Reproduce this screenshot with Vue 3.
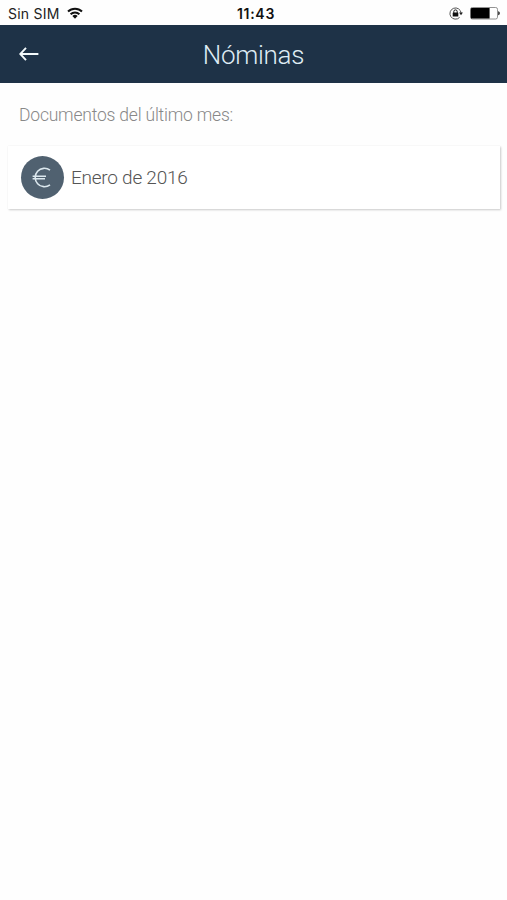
<template>
    <div class="screen">
        <div class="status-bar">
            <div class="carrier">
                <span class="carrier-name">Sin SIM</span>
                <svg class="wifi" viewBox="0 0 16 12" width="16" height="12">
                    <g fill="none" stroke="#111" stroke-width="2">
                        <path d="M1 4.5a10 10 0 0 1 14 0" />
                        <path d="M3.6 7.2a6.3 6.3 0 0 1 8.8 0" />
                    </g>
                    <path d="M5.4 9a3.8 3.8 0 0 1 5.2 0L8 11.7z" fill="#111" />
                </svg>
            </div>
            <span class="clock">11:43</span>
            <div class="indicators">
                <svg class="lock" viewBox="0 0 14 14" width="14" height="14">
                    <path d="M10.6 10.4a5.6 5.6 0 1 1 1.5-4.4" fill="none" stroke="#555" stroke-width="1" />
                    <path d="M10.1 5.6h3.8L12 8.3z" fill="#222" />
                    <rect x="3.7" y="5.6" width="5.6" height="4" rx=".4" fill="#111" />
                    <path d="M4.8 5.9V4.6a1.7 1.7 0 0 1 3.4 0v1.3" fill="none" stroke="#111" stroke-width="1" />
                </svg>
                <svg class="battery" viewBox="0 0 30 13" width="30" height="13">
                    <rect x=".5" y=".5" width="27" height="11.5" rx="1.8" fill="#fff" stroke="#777" stroke-width=".8" />
                    <path d="M2 1h17.6v10.6H2a1.2 1.2 0 0 1-1.2-1.2V2.2A1.2 1.2 0 0 1 2 1z" fill="#000" />
                    <path d="M28.2 4.3c2.1.5 2.1 3.5 0 4z" fill="#222" />
                </svg>
            </div>
        </div>

        <header class="toolbar">
            <button class="back-btn" aria-label="Volver" @click="goBack">
                <svg viewBox="0 0 20 16" width="20" height="16">
                    <path d="M7 1.8L1.2 8L7 14.2M1.5 8H19.4" fill="none" stroke="#f3fafc" stroke-width="1.9" />
                </svg>
            </button>
            <h1 class="title">Nóminas</h1>
        </header>

        <main class="content">
            <p class="subtitle">Documentos del último mes:</p>
            <div v-for="doc in documents" :key="doc.id" class="doc-card">
                <span class="doc-icon">
                    <svg viewBox="0 0 43 43" width="43" height="43">
                        <g fill="none" stroke="#dce8ee" stroke-width="1.6">
                            <path d="M29 14.2A9.2 9.2 0 1 0 29 28.8" />
                            <path d="M11.6 20.2H25M11.6 22.8H24" stroke-width="1.4" />
                        </g>
                    </svg>
                </span>
                <span class="doc-name">{{ doc.name }}</span>
            </div>
        </main>
    </div>
</template>

<script setup>
import { ref } from 'vue'

const documents = ref([
    { id: 1, name: 'Enero de 2016' }
])

const goBack = () => {
    window.history.back()
}
</script>

<style>
    body {
        margin: 0;
        background-color: #fefefe;
    }
</style>

<style scoped>
    .screen {
        min-height: 100vh;
        background-color: #fefefe;
        font-family: Roboto, "Liberation Sans", sans-serif;
    }

    .status-bar {
        display: grid;
        grid-template-columns: 1fr auto 1fr;
        align-items: center;
        height: 25px;
        padding: 0 7px 0 8px;
        box-sizing: border-box;
        font-family: Inter, "Liberation Sans", sans-serif;
        font-size: 14px;
        color: #222;
    }

    .carrier {
        display: flex;
        align-items: center;
        gap: 7px;
        padding-top: 1px;
    }

    .carrier-name {
        letter-spacing: 0.25px;
    }

    .clock {
        padding: 2px 0 0 4px;
        font-weight: 600;
        letter-spacing: 0.7px;
        color: #111;
    }

    .indicators {
        display: flex;
        justify-content: flex-end;
        align-items: center;
        gap: 7px;
        padding-top: 2px;
    }

    .toolbar {
        display: grid;
        grid-template-columns: 56px 1fr 56px;
        align-items: center;
        height: 58px;
        background-color: #1e3247;
    }

    .back-btn {
        display: flex;
        padding: 0 0 0 19px;
        border: none;
        background: none;
        cursor: pointer;
    }

    .title {
        margin: 0;
        padding-top: 2px;
        text-align: center;
        font-size: 26px;
        font-weight: 300;
        line-height: 56px;
        letter-spacing: -0.3px;
        color: #dfecf4;
    }

    .content {
        padding: 21px 7px 0 8px;
    }

    .subtitle {
        margin: 0 0 19px 11px;
        font-size: 17.5px;
        font-weight: 300;
        line-height: 23px;
        letter-spacing: -0.2px;
        color: #888;
    }

    .doc-card {
        display: flex;
        align-items: center;
        height: 63px;
        padding: 0 12.5px;
        box-sizing: border-box;
        background-color: #fff;
        box-shadow: 1px 1px 2px rgba(0, 0, 0, 0.2), 0 0 1px rgba(0, 0, 0, 0.08);
    }

    .doc-icon {
        display: flex;
        width: 43px;
        height: 43px;
        border-radius: 50%;
        background-color: #506170;
    }

    .doc-name {
        margin-left: 7.5px;
        font-size: 19px;
        font-weight: 300;
        letter-spacing: -0.25px;
        color: #555;
    }
</style>
